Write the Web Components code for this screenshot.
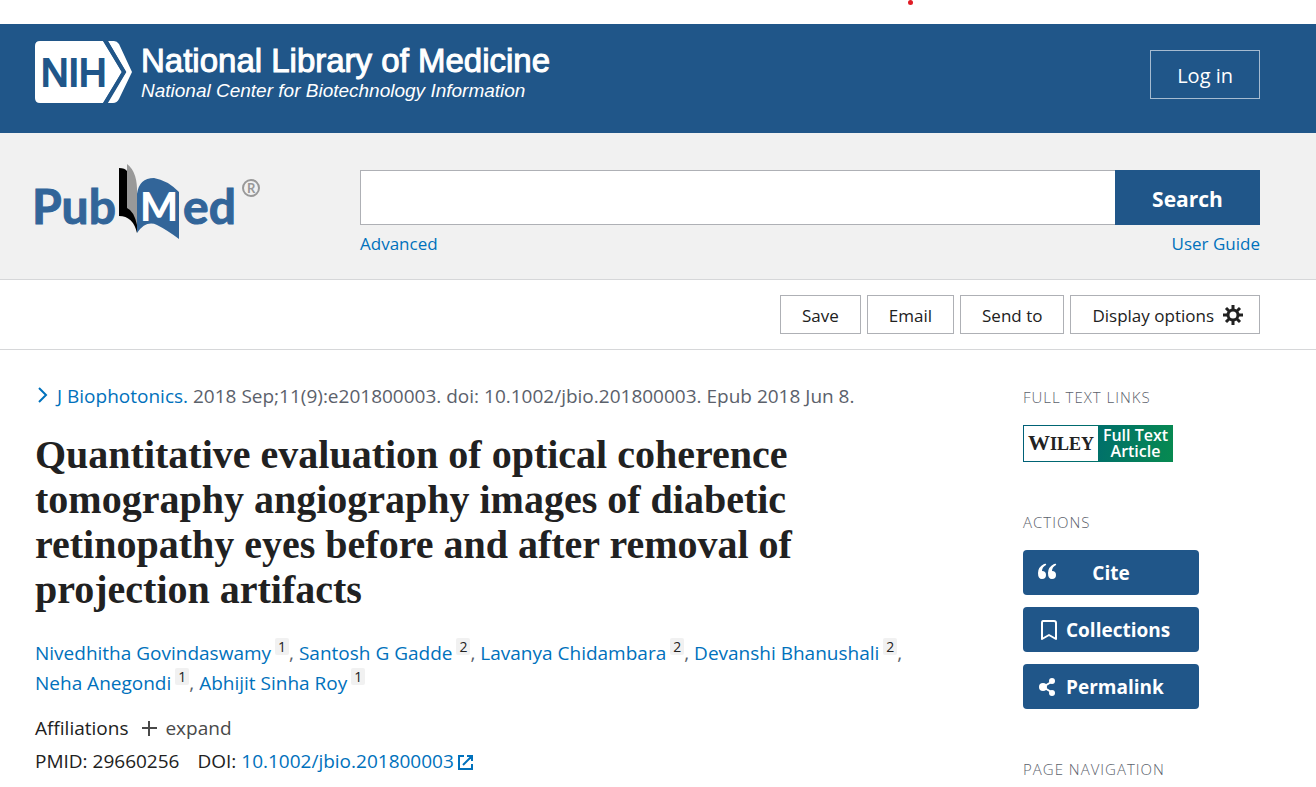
<!DOCTYPE html>
<html lang="en">
<head>
  <meta charset="utf-8">
  <meta name="viewport" content="width=device-width, initial-scale=1">
  <title>PubMed</title>
  <style>
    :root {
      --blue: #205689;
      --link: #0071bc;
      --text: #212121;
      --muted: #5b616b;
      --line: #d6d7d9;
      --border: #aeb0b5;
      --page-left: 35px;
      --page-right: 56px;
    }

    body {
      margin: 0;
      padding-top: 24px;
      background: #fff;
      color: var(--text);
      font: 19px/30px "Open Sans", "Noto Sans", sans-serif;
    }
  </style>
</head>
<body>
  <alert-dot></alert-dot>
  <ncbi-header></ncbi-header>
  <search-bar></search-bar>
  <article-tools></article-tools>
  <article-layout>
    <article-heading>
      <span slot="journal">J Biophotonics.</span>
      <span slot="citation">2018 Sep;11(9):e201800003. doi: 10.1002/jbio.201800003. Epub 2018 Jun 8.</span>
      <span slot="title">Quantitative evaluation of optical coherence tomography angiography images of diabetic retinopathy eyes before and after removal of projection artifacts</span>
    </article-heading>
    <author-list>
      <author-name ref="1">Nivedhitha Govindaswamy</author-name>
      <author-name ref="2">Santosh G Gadde</author-name>
      <author-name ref="2">Lavanya Chidambara</author-name>
      <author-name ref="2">Devanshi Bhanushali</author-name>
      <author-name ref="1">Neha Anegondi</author-name>
      <author-name ref="1" last>Abhijit Sinha Roy</author-name>
    </author-list>
    <article-ids pmid="29660256" doi="10.1002/jbio.201800003"></article-ids>

    <side-section slot="side" heading="Full text links">
      <wiley-link></wiley-link>
    </side-section>
    <side-section slot="side" heading="Actions">
      <action-button icon="cite" centered>Cite</action-button>
      <action-button icon="bookmark">Collections</action-button>
      <action-button icon="share">Permalink</action-button>
    </side-section>
    <side-section slot="side" heading="Page navigation"></side-section>
  </article-layout>

  <script>
    class BaseElement extends HTMLElement {
      connectedCallback() {
        if (this.shadowRoot) return;
        this.attachShadow({ mode: "open" });
        const template = document.createElement("template");
        template.innerHTML = this.getStyles() + this.getTemplate();
        this.shadowRoot.appendChild(template.content.cloneNode(true));
      }

      getStyles() {
        return "";
      }

      getTemplate() {
        return "<slot></slot>";
      }
    }

    class AlertDot extends BaseElement {
      getStyles() {
        return `
          <style>
            :host {
              position: absolute;
              top: 0;
              left: 908px;
              width: 5px;
              height: 5px;
              border-radius: 50%;
              background: #e01b24;
            }
          </style>
        `;
      }

      getTemplate() {
        return "";
      }
    }

    class NcbiHeader extends BaseElement {
      getStyles() {
        return `
          <style>
            :host {
              display: block;
              background: var(--blue);
              color: #fff;
            }

            header {
              display: flex;
              justify-content: space-between;
              align-items: flex-start;
              padding: 17px var(--page-right) 30px var(--page-left);
            }

            .logo {
              display: flex;
              gap: 8px;
              color: inherit;
              text-decoration: none;
              font-family: "Liberation Sans", Arial, sans-serif;
            }

            .logo svg {
              display: block;
            }

            .names {
              padding-top: 2px;
            }

            .name {
              display: block;
              font-size: 33px;
              line-height: 36px;
              -webkit-text-stroke: 1px #fff;
            }

            .center {
              display: block;
              font-size: 19px;
              line-height: 24px;
              font-style: italic;
            }

            .login {
              box-sizing: border-box;
              height: 49px;
              margin-top: 9px;
              padding: 2px 26px 0;
              border: 1px solid #a6bbd0;
              background: transparent;
              color: #fff;
              font: inherit;
              font-size: 20px;
            }
          </style>
        `;
      }

      getTemplate() {
        return `
          <header>
            <a class="logo" href="#">
              <svg width="98" height="62" viewBox="0 0 98 62" aria-hidden="true">
                <path fill="#fff" d="M5 0H68L87 31 68 62H5Q0 62 0 57V5Q0 0 5 0Z"/>
                <path fill="#fff" d="M73 0H79Q82 0 84 3L97 31 84 58Q82 62 78 62H72L91 31Z"/>
                <path fill="none" stroke="#205689" stroke-width="4" d="M70 -1L89 31 70 63"/>
                <text x="6" y="45" font-size="38" font-family="Liberation Sans, Arial, sans-serif" fill="#205689" stroke="#205689" stroke-width="2">NIH</text>
              </svg>
              <span class="names">
                <span class="name">National Library of Medicine</span>
                <span class="center">National Center for Biotechnology Information</span>
              </span>
            </a>
            <button class="login" type="button">Log in</button>
          </header>
        `;
      }
    }

    class PubmedLogo extends BaseElement {
      getStyles() {
        return `
          <style>
            :host {
              display: block;
            }

            svg {
              display: block;
              overflow: visible;
            }

            text {
              font-family: Lato, "Open Sans", sans-serif;
              font-weight: 700;
            }

            .word {
              font-size: 48px;
              fill: #326599;
              stroke: #326599;
              stroke-width: 1px;
            }

            .page {
              font-size: 40px;
              font-weight: 900;
              fill: #fff;
            }
          </style>
        `;
      }

      getTemplate() {
        return `
          <svg width="230" height="78" viewBox="0 0 230 78" role="img" aria-label="PubMed">
            <text class="word" x="-3" y="61">Pub</text>
            <path fill="#000" d="M84 5Q90 5 92 8L93 42 100 48Q104 58 102 70Q98 53 84 53Z"/>
            <path fill="#999" d="M92 1Q103 9 102 32V62Q99 48 92 45Z"/>
            <path fill="#326599" d="M102 31Q104 15 119 15Q132 17 144 29V76Q132 67 122 62Q111 57 102 70Z"/>
            <text class="page" x="105" y="58">M</text>
            <text class="word" x="148" y="61">ed</text>
            <circle cx="216" cy="25" r="8" fill="none" stroke="#999" stroke-width="2"/>
            <text x="212" y="30" font-size="13" fill="#999">R</text>
          </svg>
        `;
      }
    }

    class SearchBar extends BaseElement {
      getStyles() {
        return `
          <style>
            :host {
              display: block;
              background: #f1f1f1;
              border-bottom: 1px solid var(--line);
            }

            form {
              display: grid;
              grid-template-columns: 230px 1fr;
              gap: 95px;
              padding: 30px var(--page-right) 20px var(--page-left);
            }

            .field {
              display: flex;
              margin-top: 7px;
            }

            input {
              box-sizing: border-box;
              flex: 1;
              min-width: 0;
              height: 55px;
              padding: 0 16px;
              border: 1px solid var(--border);
              border-right: 0;
              border-radius: 0;
              background: #fff;
              font: inherit;
            }

            button {
              width: 145px;
              padding: 2px 0 0;
              border: 0;
              background: var(--blue);
              color: #fff;
              font: inherit;
              font-size: 21px;
              font-weight: 700;
            }

            .links {
              display: flex;
              justify-content: space-between;
              margin-top: 4px;
              font-size: 17px;
            }

            a {
              color: var(--link);
              text-decoration: none;
            }
          </style>
        `;
      }

      getTemplate() {
        return `
          <form role="search" onsubmit="return false">
            <pubmed-logo></pubmed-logo>
            <div>
              <div class="field">
                <input type="search" aria-label="Search PubMed">
                <button type="submit">Search</button>
              </div>
              <div class="links">
                <a href="#">Advanced</a>
                <a href="#">User Guide</a>
              </div>
            </div>
          </form>
        `;
      }
    }

    class ArticleTools extends BaseElement {
      getStyles() {
        return `
          <style>
            :host {
              display: flex;
              justify-content: flex-end;
              gap: 6px;
              padding: 15px var(--page-right) 15px var(--page-left);
              border-bottom: 1px solid var(--line);
            }

            button {
              display: flex;
              align-items: center;
              gap: 9px;
              box-sizing: border-box;
              height: 39px;
              padding: 2px 21px 0;
              border: 1px solid var(--border);
              background: #fff;
              color: var(--text);
              font: inherit;
              font-size: 17px;
            }

            .display {
              padding-right: 16px;
            }

            svg {
              margin-bottom: 2px;
            }
          </style>
        `;
      }

      getTemplate() {
        return `
          <button type="button">Save</button>
          <button type="button">Email</button>
          <button type="button">Send to</button>
          <button class="display" type="button">
            Display options
            <svg width="20" height="20" viewBox="0 0 20 20" aria-hidden="true">
              <g stroke="#212121" stroke-width="3">
                <path d="M10 0V20M0 10H20M3 3L17 17M17 3L3 17"/>
              </g>
              <circle cx="10" cy="10" r="5" fill="#fff" stroke="#212121" stroke-width="3"/>
            </svg>
          </button>
        `;
      }
    }

    class ArticleLayout extends BaseElement {
      getStyles() {
        return `
          <style>
            :host {
              display: grid;
              grid-template-columns: minmax(0, 1fr) 237px;
              gap: 80px;
              padding: 31px var(--page-right) 0 var(--page-left);
            }
          </style>
        `;
      }

      getTemplate() {
        return `
          <main><slot></slot></main>
          <aside><slot name="side"></slot></aside>
        `;
      }
    }

    class ArticleHeading extends BaseElement {
      getStyles() {
        return `
          <style>
            :host {
              display: block;
            }

            .source {
              color: var(--muted);
            }

            button {
              padding: 0;
              border: 0;
              background: none;
              color: var(--link);
              font: inherit;
            }

            svg {
              margin: 0 9px 0 3px;
            }

            h1 {
              margin: 21px 0 0;
              font: 700 40px/45px "Liberation Serif", "Times New Roman", serif;
            }
          </style>
        `;
      }

      getTemplate() {
        return `
          <div class="source">
            <button type="button"><svg width="10" height="16" viewBox="0 0 10 16" aria-hidden="true"><path fill="none" stroke="#0071bc" stroke-width="2" d="M1 1L8 8 1 15"/></svg><slot name="journal"></slot></button>
            <slot name="citation"></slot>
          </div>
          <h1><slot name="title"></slot></h1>
        `;
      }
    }

    class AuthorList extends BaseElement {
      getStyles() {
        return `
          <style>
            :host {
              display: block;
              margin-top: 26px;
              color: var(--muted);
            }
          </style>
        `;
      }
    }

    class AuthorName extends BaseElement {
      getStyles() {
        return `
          <style>
            :host {
              display: inline;
            }

            a {
              color: var(--link);
              text-decoration: none;
            }

            sup {
              display: inline-block;
              margin-left: 4px;
              padding: 0 3px;
              border-radius: 2px;
              background: #f1f1f1;
              font-size: 14px;
              line-height: 17px;
              vertical-align: 8px;
            }

            sup a {
              color: var(--text);
            }
          </style>
        `;
      }

      getTemplate() {
        const comma = this.hasAttribute("last") ? "" : ",";
        return `<a href="#"><slot></slot></a><sup><a href="#">${this.getAttribute("ref")}</a></sup>${comma}`;
      }
    }

    class ArticleIds extends BaseElement {
      getStyles() {
        return `
          <style>
            :host {
              display: block;
              margin-top: 15px;
            }

            div {
              display: flex;
              align-items: center;
            }

            .affiliations {
              gap: 14px;
            }

            .ids {
              gap: 18px;
              margin-top: 3px;
            }

            button {
              display: flex;
              align-items: center;
              gap: 8px;
              padding: 0;
              border: 0;
              background: none;
              color: #494949;
              font: inherit;
            }

            a {
              color: var(--link);
              text-decoration: none;
            }

            a svg {
              margin-left: 4px;
              vertical-align: -2px;
            }
          </style>
        `;
      }

      getTemplate() {
        return `
          <div class="affiliations">
            <span>Affiliations</span>
            <button type="button">
              <svg width="15" height="15" viewBox="0 0 15 15" aria-hidden="true"><path stroke="#494949" stroke-width="2" d="M7 0V15M0 7H15"/></svg>
              expand
            </button>
          </div>
          <div class="ids">
            <span>PMID: ${this.getAttribute("pmid")}</span>
            <span>DOI: <a href="#">${this.getAttribute("doi")}<svg width="15" height="15" viewBox="0 0 15 15" aria-hidden="true"><path fill="none" stroke="#0071bc" stroke-width="2" d="M6 1H1V14H14V9M9 1H14V6M14 1L5 10"/></svg></a></span>
          </div>
        `;
      }
    }

    class SideSection extends BaseElement {
      getStyles() {
        return `
          <style>
            :host {
              display: block;
              margin-bottom: 44px;
            }

            :host(:last-child) {
              margin-bottom: 0;
            }

            h2 {
              margin: 0;
              color: var(--muted);
              font-size: 15px;
              line-height: 32px;
              font-weight: 300;
              letter-spacing: 1px;
              text-transform: uppercase;
            }

            .items {
              display: flex;
              flex-direction: column;
              align-items: flex-start;
              gap: 12px;
            }

            :host(:not(:last-child)) .items {
              margin-top: 12px;
            }
          </style>
        `;
      }

      getTemplate() {
        return `
          <h2>${this.getAttribute("heading")}</h2>
          <div class="items"><slot></slot></div>
        `;
      }
    }

    class WileyLink extends BaseElement {
      getStyles() {
        return `
          <style>
            :host {
              display: block;
            }

            a {
              display: grid;
              grid-template-columns: 75px 75px;
              grid-template-rows: 37px;
              background: linear-gradient(100deg, #005f78, #00706a 50%, #078a50);
              color: #fff;
              text-decoration: none;
            }

            .brand {
              margin: 1px 0 1px 1px;
              background: #fff;
              color: #222;
              font: 700 22px/33px "Liberation Serif", serif;
              text-align: center;
            }

            small {
              font-size: 18px;
            }

            .label {
              padding-top: 2px;
              font-size: 16px;
              line-height: 16px;
              font-weight: 600;
              text-align: center;
              white-space: nowrap;
            }
          </style>
        `;
      }

      getTemplate() {
        return `
          <a href="#">
            <span class="brand">W<small>ILEY</small></span>
            <span class="label">Full Text<br>Article</span>
          </a>
        `;
      }
    }

    const icons = {
      cite: `<path fill="#fff" d="M8 2Q4 4 4 8Q8 8 8 12Q8 16 4 16Q0 16 0 10Q0 4 6 1Q9 0 8 2ZM18 2Q14 4 14 8Q18 8 18 12Q18 16 14 16Q10 16 10 10Q10 4 16 1Q19 0 18 2Z"/>`,
      bookmark: `<path fill="none" stroke="#fff" stroke-width="2" stroke-linejoin="round" d="M5 1H16Q18 1 18 3V19L11 15 4 19V3Q4 1 5 1Z"/>`,
      share: `<path fill="none" stroke="#fff" stroke-width="2" d="M15 4L5 10 15 16"/><circle cx="14" cy="4" r="3" fill="#fff"/><circle cx="5" cy="10" r="4" fill="#fff"/><circle cx="14" cy="16" r="3" fill="#fff"/>`
    };

    class ActionButton extends BaseElement {
      getStyles() {
        return `
          <style>
            :host {
              display: block;
            }

            button {
              display: flex;
              align-items: center;
              gap: 8px;
              width: 176px;
              height: 45px;
              padding: 0 15px;
              border: 0;
              border-radius: 4px;
              background: var(--blue);
              color: #fff;
              font: inherit;
              font-weight: 700;
            }

            svg {
              flex: none;
            }

            :host([centered]) span {
              flex: 1;
              padding-right: 28px;
            }
          </style>
        `;
      }

      getTemplate() {
        return `
          <button type="button">
            <svg width="20" height="20" viewBox="0 0 20 20" aria-hidden="true">${icons[this.getAttribute("icon")]}</svg>
            <span><slot></slot></span>
          </button>
        `;
      }
    }

    customElements.define("alert-dot", AlertDot);
    customElements.define("ncbi-header", NcbiHeader);
    customElements.define("pubmed-logo", PubmedLogo);
    customElements.define("search-bar", SearchBar);
    customElements.define("article-tools", ArticleTools);
    customElements.define("article-layout", ArticleLayout);
    customElements.define("article-heading", ArticleHeading);
    customElements.define("author-list", AuthorList);
    customElements.define("author-name", AuthorName);
    customElements.define("article-ids", ArticleIds);
    customElements.define("side-section", SideSection);
    customElements.define("wiley-link", WileyLink);
    customElements.define("action-button", ActionButton);
  </script>
</body>
</html>
